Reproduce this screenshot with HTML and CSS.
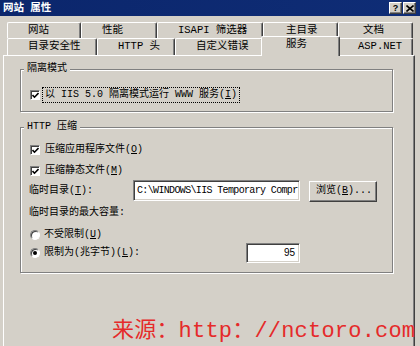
FILE: index.html
```html
<!DOCTYPE html>
<html lang="zh">
<head>
<meta charset="utf-8">
<title>网站 属性</title>
<link rel="stylesheet" href="styles.css">
</head>
<body>
<div class="win">
  <div class="titlebar">
    <span class="title">网站 属性</span>
    <div class="tbtns">
      <span class="tbtn help">?</span>
      <span class="tbtn close"><svg width="8" height="7" viewBox="0 0 8 7"><path d="M0.5 0.5 L7.5 6.5 M7.5 0.5 L0.5 6.5" stroke="#000" stroke-width="1.6" fill="none"/></svg></span>
    </div>
  </div>

  <div class="tabs">
    <div class="row row1">
      <span class="tab t1a">网站</span>
      <span class="tab t1b">性能</span>
      <span class="tab t1c">ISAPI 筛选器</span>
      <span class="tab t1d">主目录</span>
      <span class="tab t1e">文档</span>
    </div>
    <div class="row row2">
      <span class="tab t2a">目录安全性</span>
      <span class="tab t2b">HTTP 头</span>
      <span class="tab t2c">自定义错误</span>
      <span class="tab t2d active">服务</span>
      <span class="tab t2e">ASP.NET</span>
    </div>
  </div>

  <div class="panel">
    <div class="group g1">
      <div class="gtitle">隔离模式</div>
      <div class="opt first">
        <span class="cb"><svg width="7" height="7" viewBox="0 0 7 7"><path d="M0.5 3 L2.5 5.2 L6.5 1" stroke="#000" stroke-width="1.6" fill="none"/></svg></span>
        <span class="lbl focus">以 IIS 5.0 隔离模式运行 WWW 服务(<u>I</u>)</span>
      </div>
    </div>

    <div class="group g2">
      <div class="gtitle">HTTP 压缩</div>
      <div class="opt c1">
        <span class="cb"><svg width="7" height="7" viewBox="0 0 7 7"><path d="M0.5 3 L2.5 5.2 L6.5 1" stroke="#000" stroke-width="1.6" fill="none"/></svg></span>
        <span class="lbl">压缩应用程序文件(<u>O</u>)</span>
      </div>
      <div class="opt c2">
        <span class="cb"><svg width="7" height="7" viewBox="0 0 7 7"><path d="M0.5 3 L2.5 5.2 L6.5 1" stroke="#000" stroke-width="1.6" fill="none"/></svg></span>
        <span class="lbl">压缩静态文件(<u>M</u>)</span>
      </div>
      <div class="dirrow">
        <span class="dirlbl">临时目录(<u>T</u>):</span>
        <span class="field dirfield">C:\WINDOWS\IIS Temporary Compr</span>
        <span class="btn">浏览(<u>B</u>)...</span>
      </div>
      <div class="maxlbl">临时目录的最大容量:</div>
      <div class="opt r1">
        <span class="radio"></span>
        <span class="lbl">不受限制(<u>U</u>)</span>
      </div>
      <div class="opt r2">
        <span class="radio on"><span class="dot"></span></span>
        <span class="lbl rlbl">限制为(兆字节)(<u>L</u>):</span>
        <span class="field numfield">95</span>
      </div>
    </div>

    <div class="watermark">来源：http：//nctoro.com</div>
  </div>
</div>
</body>
</html>
```

FILE: styles.css
```css
html, body {
  margin: 0;
  padding: 0;
}
body {
  width: 420px;
  height: 346px;
  overflow: hidden;
  background: #d4d0c8;
  font-family: "Liberation Mono", "Noto Sans CJK SC", monospace;
  font-size: 10px;
  color: #000;
}
.win {
  width: 420px;
  height: 346px;
  overflow: hidden;
}
u {
  text-decoration: underline;
  text-underline-offset: 1px;
}

/* title bar */
.titlebar {
  height: 16px;
  background: linear-gradient(to right, #0b266c, #0f2d76);
  display: flex;
  align-items: center;
  justify-content: space-between;
  padding: 0 4px 0 3px;
}
.title {
  color: #fff;
  font-weight: bold;
  font-size: 10.5px;
  line-height: 14px;
}
.tbtns {
  display: flex;
  gap: 1px;
}
.tbtn {
  width: 11px;
  height: 10px;
  background: #d4d0c8;
  border-top: 1px solid #fff;
  border-left: 1px solid #fff;
  border-right: 1px solid #404040;
  border-bottom: 1px solid #404040;
  box-shadow: inset -1px -1px 0 #808080;
  display: flex;
  align-items: center;
  justify-content: center;
  box-sizing: content-box;
}
.help {
  font-family: "Liberation Sans", sans-serif;
  font-weight: bold;
  font-size: 9px;
  line-height: 10px;
}

/* tabs */
.tabs {
  margin-top: 6px;
}
.row {
  display: flex;
  margin-left: 7px;
}
.row1 {
  height: 16px;
}
.row2 {
  height: 17px;
}
.tab {
  box-sizing: border-box;
  height: 100%;
  border-top: 1px solid #fff;
  border-left: 1px solid #fff;
  border-right: 1px solid #404040;
  box-shadow: inset -1px 0 0 #808080;
  border-radius: 2px 2px 0 0;
  padding-left: 20px;
  font-size: 10.5px;
  line-height: 15px;
  white-space: nowrap;
  background: #d4d0c8;
}
.t1a { width: 74px; }
.t1b { width: 76px; }
.t1c { width: 106px; }
.t1d { width: 75px; padding-left: 22px; }
.t1e { width: 75px; padding-left: 24px; }
.t2a { width: 90px; }
.t2b { width: 78px; }
.t2c { width: 88px; }
.t2d { width: 75px; }
.t2e { width: 75px; padding-left: 19px; }
.tab.active {
  position: relative;
  z-index: 1;
  width: 79px;
  height: 20px;
  margin: -2px -2px 0 -2px;
  padding-left: 24px;
  line-height: 14px;
}

/* panel */
.panel {
  box-sizing: border-box;
  margin-left: 3px;
  width: 412px;
  height: 300px;
  border-top: 1px solid #fff;
  border-left: 1px solid #fff;
  border-right: 1px solid #404040;
  box-shadow: inset -1px 0 0 #808080;
  padding-top: 13px;
}

.group {
  box-sizing: border-box;
  margin-left: 16px;
  width: 373px;
  border: 1px solid #808080;
  box-shadow: 1px 1px 0 #fff, inset 1px 1px 0 #fff;
}
.g1 {
  padding-bottom: 9px;
}
.g2 {
  margin-top: 15px;
  padding-bottom: 9px;
}
.gtitle {
  width: fit-content;
  margin: -8px 0 0 3px;
  padding: 0 3px;
  height: 14px;
  line-height: 14px;
  background: #d4d0c8;
}

.opt {
  display: flex;
  align-items: center;
  height: 14px;
  padding-left: 9px;
}
.g1 .first { margin-top: 12px; }
.c1 { margin-top: 9px; }
.c2 { margin-top: 7px; }
.r1 { margin-top: 8px; }
.r2 { margin-top: 1px; height: 20px; }

.cb {
  box-sizing: border-box;
  width: 10px;
  height: 10px;
  background: #fff;
  border-top: 1px solid #808080;
  border-left: 1px solid #808080;
  border-right: 1px solid #fff;
  border-bottom: 1px solid #fff;
  box-shadow: inset 1px 1px 0 #404040;
  display: flex;
  align-items: center;
  justify-content: center;
  margin-right: 4px;
  flex: none;
}
.cb svg {
  margin: 1px 0 0 1px;
}
.lbl {
  line-height: 12px;
  white-space: nowrap;
}
.focus {
  outline: 1px dotted #000;
  outline-offset: 1px;
  padding: 0 1px;
}
.c1 .lbl, .c2 .lbl { padding-left: 1px; }

.radio {
  box-sizing: border-box;
  width: 10px;
  height: 10px;
  border-radius: 50%;
  background: #fff;
  border: 1px solid;
  border-color: #808080 #fff #fff #808080;
  box-shadow: inset 1px 1px 0 #404040;
  display: flex;
  align-items: center;
  justify-content: center;
  margin-right: 4px;
  flex: none;
}
.dot {
  width: 4px;
  height: 4px;
  border-radius: 50%;
  background: #000;
}
.rlbl {
  width: 202px;
}

.dirrow {
  display: flex;
  align-items: flex-start;
  margin-top: 2px;
  height: 22px;
  padding-left: 8px;
}
.dirlbl {
  width: 104px;
  line-height: 21px;
  white-space: nowrap;
}
.field {
  box-sizing: border-box;
  background: #fff;
  border-top: 1px solid #808080;
  border-left: 1px solid #808080;
  border-right: 1px solid #fff;
  border-bottom: 1px solid #fff;
  box-shadow: inset 1px 1px 0 #404040, inset -1px -1px 0 #d4d0c8;
  white-space: nowrap;
  overflow: hidden;
}
.dirfield {
  width: 167px;
  height: 21px;
  line-height: 19px;
  padding-left: 3px;
  letter-spacing: -0.65px;
}
.btn {
  box-sizing: border-box;
  width: 68px;
  height: 21px;
  margin: 1px 0 0 9px;
  border-top: 1px solid #fff;
  border-left: 1px solid #fff;
  border-right: 1px solid #404040;
  border-bottom: 1px solid #404040;
  box-shadow: inset -1px -1px 0 #808080;
  line-height: 18px;
  padding-left: 6px;
  white-space: nowrap;
}
.maxlbl {
  margin-top: 4px;
  height: 14px;
  line-height: 14px;
  padding-left: 8px;
}
.numfield {
  width: 54px;
  height: 20px;
  line-height: 18px;
  text-align: right;
  padding-right: 4px;
  font-family: "Liberation Sans", sans-serif;
  font-size: 10px;
}

.watermark {
  margin-top: 46px;
  padding-left: 108px;
  font-size: 22px;
  letter-spacing: 0.2px;
  line-height: 26px;
  color: #e52a2a;
  white-space: nowrap;
}
```
